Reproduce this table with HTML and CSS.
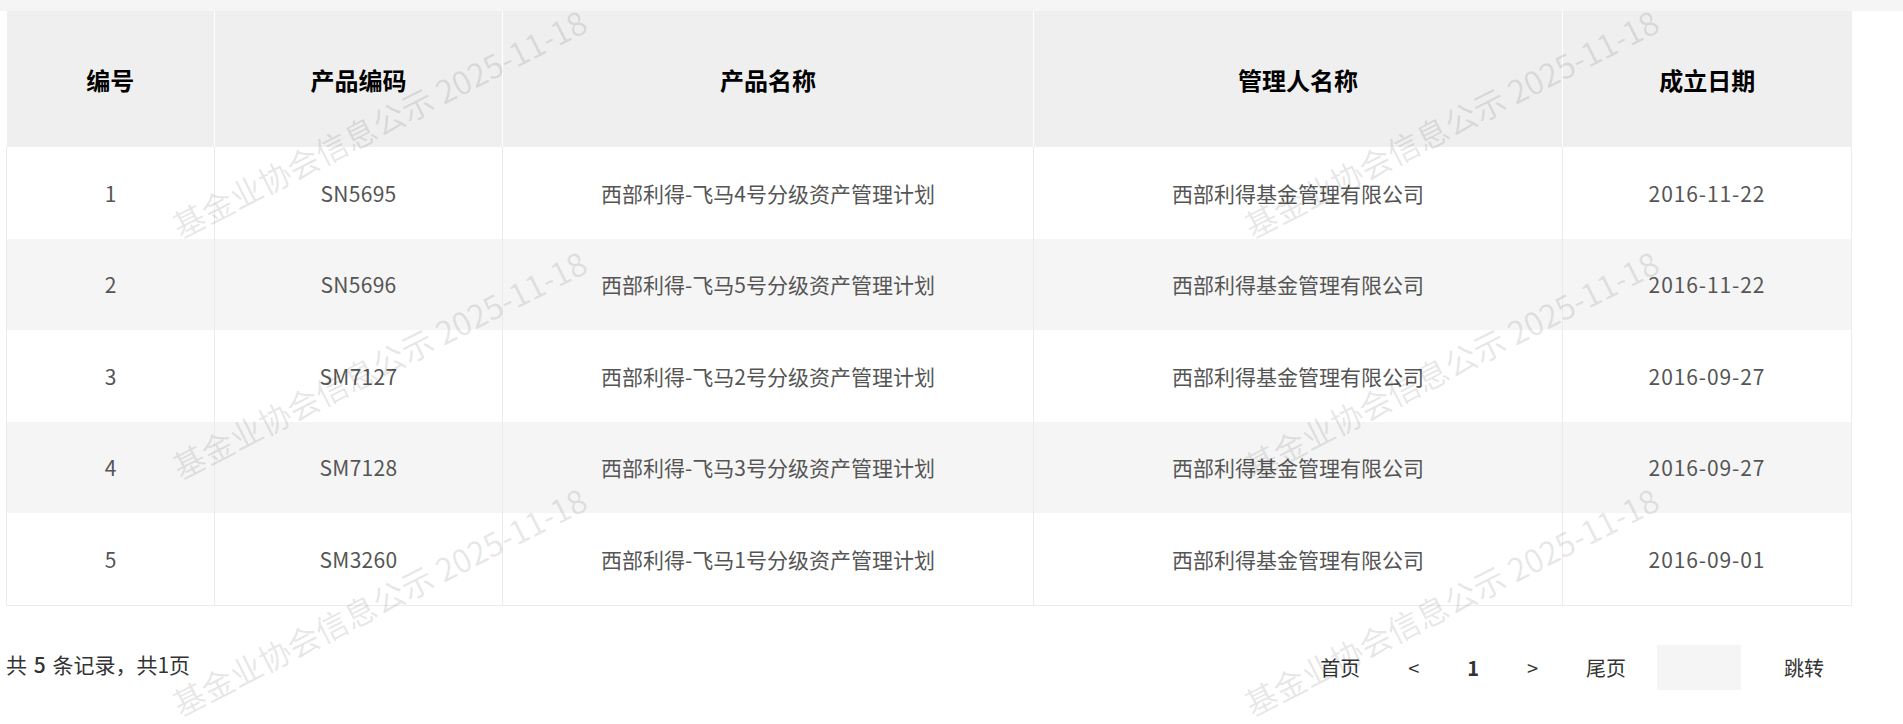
FILE: index.html
```html
<!DOCTYPE html>
<html lang="zh-CN">
<head>
<meta charset="utf-8">
<title>产品列表</title>
<link rel="stylesheet" href="styles.css">
</head>
<body>
<div class="topbar"></div>
<div class="page">
  <table class="grid">
    <colgroup>
      <col class="c1"><col class="c2"><col class="c3"><col class="c4"><col class="c5">
    </colgroup>
    <thead>
      <tr><th>编号</th><th>产品编码</th><th>产品名称</th><th>管理人名称</th><th>成立日期</th></tr>
    </thead>
    <tbody>
      <tr><td>1</td><td class="code">SN5695</td><td class="left">西部利得-飞马4号分级资产管理计划</td><td>西部利得基金管理有限公司</td><td class="date">2016-11-22</td></tr>
      <tr class="alt"><td>2</td><td class="code">SN5696</td><td class="left">西部利得-飞马5号分级资产管理计划</td><td>西部利得基金管理有限公司</td><td class="date">2016-11-22</td></tr>
      <tr><td>3</td><td class="code">SM7127</td><td class="left">西部利得-飞马2号分级资产管理计划</td><td>西部利得基金管理有限公司</td><td class="date">2016-09-27</td></tr>
      <tr class="alt"><td>4</td><td class="code">SM7128</td><td class="left">西部利得-飞马3号分级资产管理计划</td><td>西部利得基金管理有限公司</td><td class="date">2016-09-27</td></tr>
      <tr><td>5</td><td class="code">SM3260</td><td class="left">西部利得-飞马1号分级资产管理计划</td><td>西部利得基金管理有限公司</td><td class="date">2016-09-01</td></tr>
    </tbody>
  </table>
  <div class="pager-row">
    <div class="summary">共 <span class="num">5</span> 条记录，共1页</div>
    <div class="pager">
      <span class="pg first">首页</span>
      <span class="pg arrow">&lt;</span>
      <span class="pg cur">1</span>
      <span class="pg arrow">&gt;</span>
      <span class="pg last">尾页</span>
      <span class="jump-box"></span>
      <span class="pg jump">跳转</span>
    </div>
  </div>
</div>
<div class="wm" style="left:379px;top:123px">基金业协会信息公示 2025-11-18</div>
<div class="wm" style="left:1451px;top:123px">基金业协会信息公示 2025-11-18</div>
<div class="wm" style="left:379px;top:364px">基金业协会信息公示 2025-11-18</div>
<div class="wm" style="left:1451px;top:364px">基金业协会信息公示 2025-11-18</div>
<div class="wm" style="left:379px;top:601px">基金业协会信息公示 2025-11-18</div>
<div class="wm" style="left:1451px;top:601px">基金业协会信息公示 2025-11-18</div>
</body>
</html>
```
FILE: styles.css
```css
html, body {
  margin: 0;
  padding: 0;
  background: #ffffff;
}
body {
  position: relative;
  width: 1903px;
  height: 724px;
  overflow: hidden;
  font-family: "Noto Sans CJK SC", "Noto Sans", sans-serif;
}
.topbar {
  height: 11px;
  background: #f5f5f5;
}
.page {
  padding: 0 52px 0 6px;
}
.grid {
  width: 1845px;
  table-layout: fixed;
  border-collapse: collapse;
}
.c1 { width: 208px; }
.c2 { width: 288px; }
.c3 { width: 531px; }
.c4 { width: 529px; }
.c5 { width: 289px; }
.grid th {
  height: 136px;
  padding: 0;
  background: #efefef;
  color: #000;
  font-size: 24px;
  font-weight: 700;
  text-align: center;
  border-left: 1px solid #ffffff;
}
.grid th:first-child { border-left: none; }
.grid td {
  height: 91.5px;
  padding: 0;
  color: #555;
  font-size: 21px;
  text-align: center;
  border-left: 1px solid #ebebeb;
  border-right: 1px solid #ebebeb;
}
.grid td.code { letter-spacing: 0.3px; }
.grid td.date { letter-spacing: 0.9px; }
.grid tbody tr:last-child td {
  border-bottom: 1px solid #ebebeb;
}
.grid tr.alt td {
  background: #f5f5f5;
}
.grid td.left {
  text-align: left;
  padding-left: 98px;
}
.pager-row {
  display: flex;
  justify-content: space-between;
  align-items: center;
  margin-top: 39px;
  font-size: 20px;
  color: #333;
}
.summary {
  position: relative;
  top: -3px;
  font-size: 21px;
  word-spacing: 2px;
}
.summary .num { font-weight: 500; }
.pager {
  display: flex;
  align-items: center;
  padding-right: 27px;
}
.pg {
  display: inline-block;
}
.first { margin-right: 48px; }
.arrow { width: 11px; text-align: center; }
.cur { font-weight: 700; margin: 0 48px; }
.last { margin-left: 48px; margin-right: 31px; }
.jump-box {
  display: inline-block;
  width: 84px;
  height: 45px;
  background: #f5f5f5;
  margin-right: 43px;
}
.wm {
  position: absolute;
  transform: translate(-50%, -50%) rotate(-27deg);
  white-space: nowrap;
  font-size: 32px;
  line-height: 1.1;
  color: rgba(0, 0, 0, 0.1);
  pointer-events: none;
  font-family: "Noto Sans CJK SC", sans-serif;
  font-weight: 400;
}
```
